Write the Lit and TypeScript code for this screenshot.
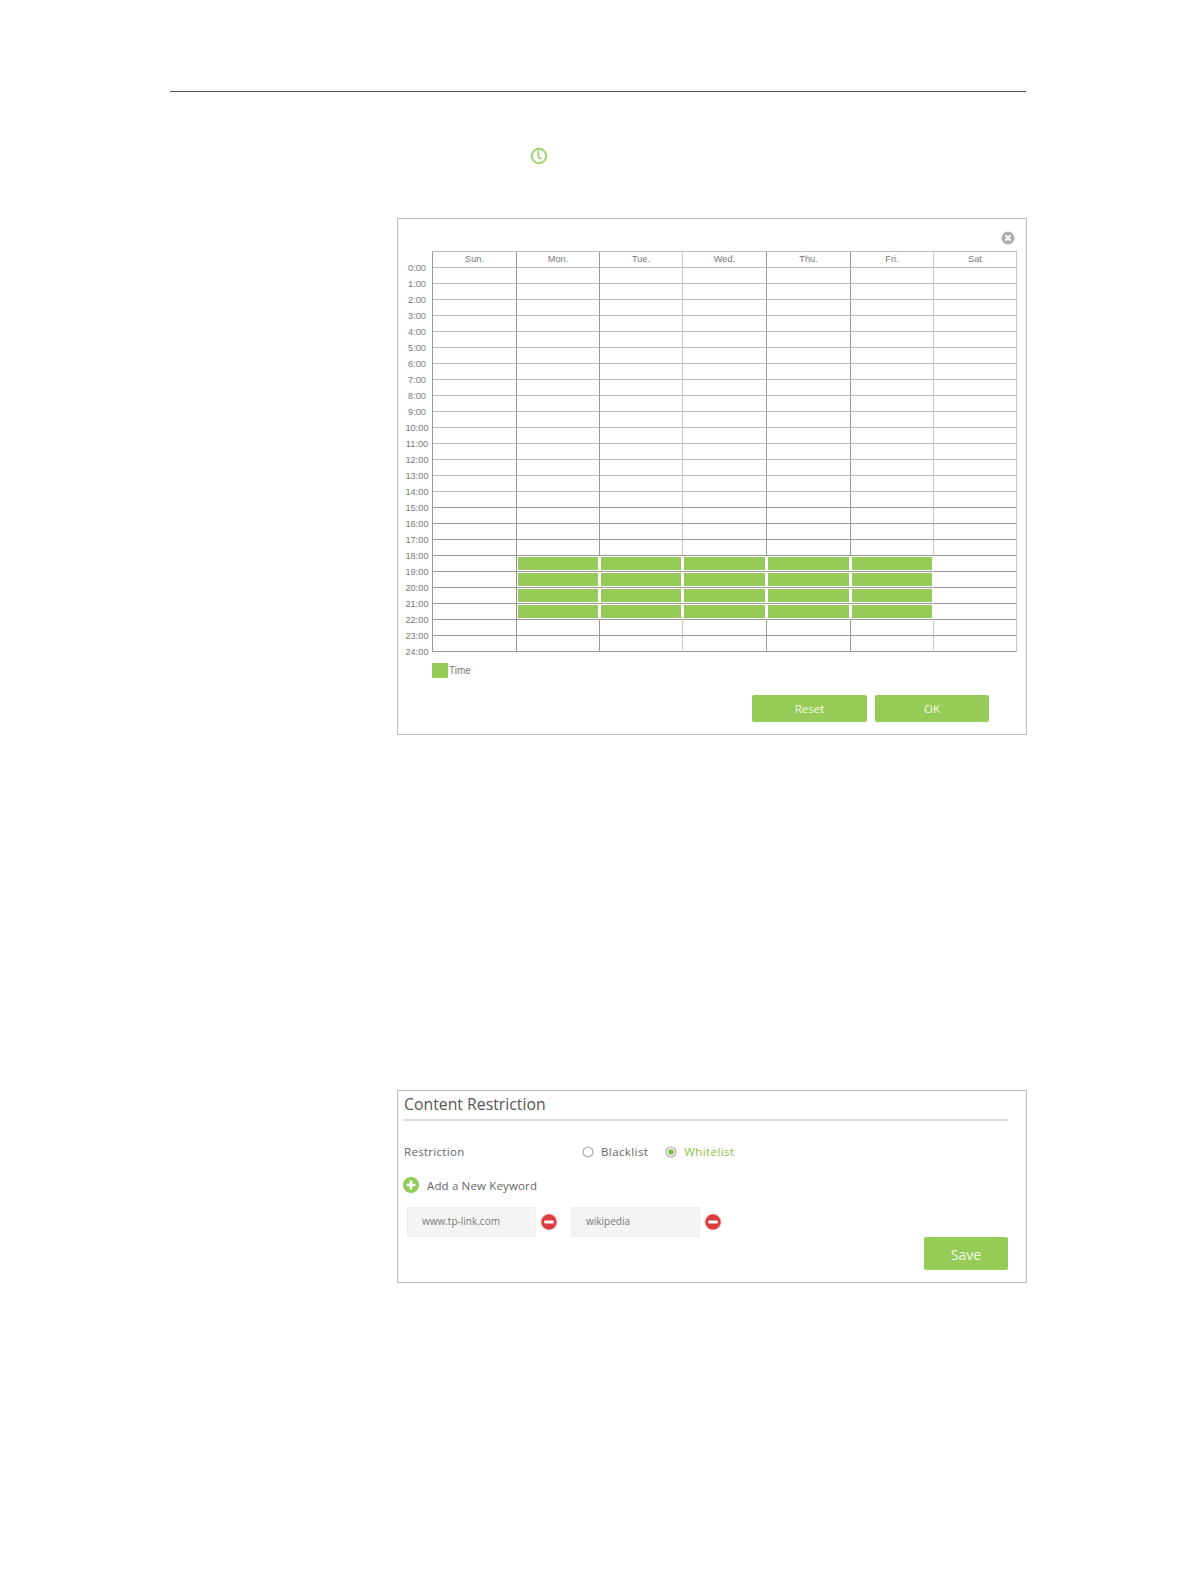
import { LitElement, html, css, svg } from 'lit';
import { customElement } from 'lit/decorators.js';
import { classMap } from 'lit/directives/class-map.js';

const DAYS = ['Sun.', 'Mon.', 'Tue.', 'Wed.', 'Thu.', 'Fri.', 'Sat'];
const HOURS = Array.from({ length: 25 }, (_, i) => `${i}:00`);
// columns whose right line is printed paler in the reference
const PALE_COLUMNS = [2, 5, 6];

const isActive = (day: number, row: number) => day >= 1 && day <= 5 && row >= 18 && row <= 21;

const minusIcon = svg`<svg class="icon" width="18" height="18" viewBox="0 0 18 18">
  <circle cx="9" cy="9" r="8.5" fill="#f3c4c4"></circle>
  <circle cx="9" cy="9" r="7.6" fill="#db3c3e"></circle>
  <rect x="4.2" y="7.6" width="9.6" height="2.8" rx="1" fill="#fff"></rect>
</svg>`;

@customElement('app-root')
export class AppRoot extends LitElement {
  static styles = css`
    :host {
      display: block;
      min-height: 1582px;
      background: #fff;
      font-family: 'Open Sans', sans-serif;
      color: #666;
    }

    .page {
      display: flow-root;
    }

    .top-rule {
      height: 1px;
      margin: 91px 170px 0;
      background: #555;
    }

    .clock {
      display: block;
      margin: 55px 0 0 530px;
    }

    .panel {
      box-sizing: border-box;
      width: 630px;
      margin-left: 397px;
      border: 1px solid #bbb;
      background: #fff;
    }

    .schedule {
      margin-top: 53px;
      padding: 0 37px 12px 4px;
      font-family: 'Liberation Sans', sans-serif;
      font-size: 9.2px;
      color: #777;
    }

    .close-row {
      display: flex;
      justify-content: flex-end;
      height: 32px;
      box-sizing: border-box;
      margin-right: -26px;
      padding-top: 12px;
    }

    .chart {
      display: flex;
      width: 615px;
    }

    .hours {
      width: 30px;
      padding-top: 9px;
      /* the last label hangs below the table and must not push the legend down */
      margin-bottom: -8px;
      text-align: center;
    }

    .hour {
      height: 16px;
      line-height: 16px;
    }

    .table {
      display: grid;
      grid-template-columns: 84px 83px 83px 84px 84px 83px 83px;
      grid-auto-rows: 16px;
      border-top: 1px solid #bbb;
      border-left: 1px solid #999;
    }

    .cell {
      box-sizing: border-box;
      border-right: 1px solid #999;
      border-bottom: 1px solid #999;
    }

    .cell.pale {
      border-right-color: #c8c8c8;
    }

    .cell.upper {
      border-bottom-color: #bbb;
    }

    .cell.on {
      border-right-color: #fff;
    }

    .head {
      text-align: center;
      line-height: 11px;
      padding-top: 2px;
      border-bottom-color: #bbb;
    }

    .slot {
      height: 13px;
      margin: 1px;
      background: #95cb56;
    }

    .legend {
      display: flex;
      align-items: center;
      gap: 1px;
      margin: 11px 0 0 30px;
      font-size: 10px;
    }

    .swatch {
      width: 16px;
      height: 15px;
      background: #95cb56;
    }

    .actions {
      display: flex;
      justify-content: flex-end;
      gap: 8px;
      margin-top: 17px;
    }

    .button {
      display: flex;
      align-items: center;
      justify-content: center;
      height: 27px;
      border-radius: 2px;
      background: #95cb56;
      color: #f2fae6;
      font-family: 'Open Sans', sans-serif;
      font-size: 11.5px;
    }

    .button.wide {
      width: 115px;
    }

    .button.ok {
      width: 114px;
    }

    .button.save {
      box-sizing: border-box;
      width: 84px;
      height: 33px;
      padding-top: 2px;
      font-size: 14px;
      letter-spacing: 0;
    }

    .content {
      margin-top: 355px;
      padding: 0 18px 12px 5px;
      font-size: 11.5px;
      letter-spacing: 0.4px;
    }

    .title {
      height: 28px;
      padding-left: 1px;
      line-height: 27px;
      border-bottom: 2px solid #ddd;
      font-size: 15.8px;
      letter-spacing: 0;
      color: #555;
    }

    .row {
      display: flex;
      align-items: center;
      height: 20px;
    }

    .restriction {
      margin-top: 20px;
    }

    .row-label {
      width: 178px;
      padding-left: 1px;
      letter-spacing: 0.3px;
    }

    .radio {
      display: flex;
      align-items: center;
      gap: 7px;
      margin-right: 17px;
    }

    .radio svg {
      margin-top: 1px;
    }

    .radio.checked {
      color: #8cbf3f;
    }

    .add {
      gap: 8px;
      margin-top: 14px;
      letter-spacing: 0.15px;
    }

    .keywords {
      display: flex;
      align-items: center;
      margin: 12px 0 0 4px;
    }

    .keyword {
      display: flex;
      align-items: center;
      box-sizing: border-box;
      width: 129px;
      height: 30px;
      padding: 0 0 2px 14px;
      border: 1px solid #eee;
      background: #f4f4f4;
      color: #777;
      font-size: 10px;
      letter-spacing: 0;
    }

    .keyword + .icon {
      margin: 0 13px 0 4px;
    }

    .content-actions {
      display: flex;
      justify-content: flex-end;
    }
  `;

  renderCell(day: number, row: number) {
    const on = isActive(day, row);
    const classes = {
      cell: true,
      pale: PALE_COLUMNS.includes(day),
      upper: row < 14,
      on,
    };
    return html`<div class=${classMap(classes)}>${on ? html`<div class="slot"></div>` : ''}</div>`;
  }

  renderSchedule() {
    return html`
      <section class="panel schedule">
        <div class="close-row">
          <svg width="14" height="14" viewBox="0 0 14 14">
            <circle cx="7" cy="7" r="6.5" fill="#adadad"></circle>
            <path d="M4.4 4.4l5.2 5.2M9.6 4.4l-5.2 5.2" stroke="#fff" stroke-width="1.8"></path>
          </svg>
        </div>
        <div class="chart">
          <div class="hours">${HOURS.map((h) => html`<div class="hour">${h}</div>`)}</div>
          <div class="table">
            ${DAYS.map((d, i) => html`<div class="cell head ${PALE_COLUMNS.includes(i) ? 'pale' : ''}">${d}</div>`)}
            ${HOURS.slice(0, 24).map((_, row) => DAYS.map((_d, day) => this.renderCell(day, row)))}
          </div>
        </div>
        <div class="legend"><span class="swatch"></span><span>Time</span></div>
        <div class="actions">
          <div class="button wide">Reset</div>
          <div class="button ok">OK</div>
        </div>
      </section>
    `;
  }

  renderContent() {
    return html`
      <section class="panel content">
        <div class="title">Content Restriction</div>
        <div class="row restriction">
          <span class="row-label">Restriction</span>
          <span class="radio">
            <svg width="12" height="12" viewBox="0 0 12 12">
              <circle cx="6" cy="6" r="5" fill="#fff" stroke="#aaa" stroke-width="1.2"></circle>
            </svg>
            Blacklist
          </span>
          <span class="radio checked">
            <svg width="12" height="12" viewBox="0 0 12 12">
              <circle cx="6" cy="6" r="5" fill="#fff" stroke="#aaa" stroke-width="1.2"></circle>
              <circle cx="6" cy="6" r="2.8" fill="#7fba3c"></circle>
            </svg>
            Whitelist
          </span>
        </div>
        <div class="row add">
          <svg width="16" height="16" viewBox="0 0 16 16">
            <circle cx="8" cy="8" r="8" fill="#8fcb55"></circle>
            <path d="M8 3.6v8.8M3.6 8h8.8" stroke="#fff" stroke-width="2.6"></path>
          </svg>
          <span>Add a New Keyword</span>
        </div>
        <div class="keywords">
          <div class="keyword">www.tp-link.com</div>
          ${minusIcon}
          <div class="keyword">wikipedia</div>
          ${minusIcon}
        </div>
        <div class="content-actions"><div class="button save">Save</div></div>
      </section>
    `;
  }

  render() {
    return html`
      <div class="page">
        <div class="top-rule"></div>
        <svg class="clock" width="18" height="18" viewBox="0 0 18 18">
          <circle cx="9" cy="9" r="7.2" fill="none" stroke="#9ad36a" stroke-width="2"></circle>
          <path d="M8.2 3.6v6l3.4 2.6" fill="none" stroke="#9ad36a" stroke-width="1.6"></path>
        </svg>
        ${this.renderSchedule()}
        ${this.renderContent()}
      </div>
    `;
  }
}
